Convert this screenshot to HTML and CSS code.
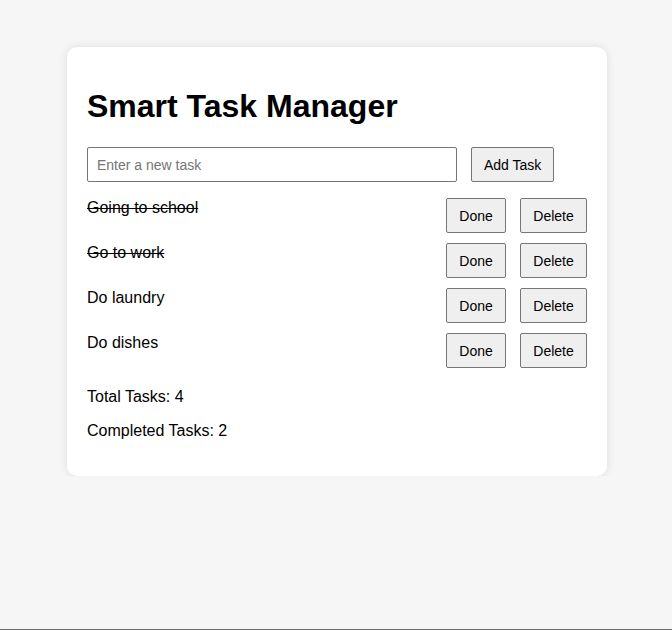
FILE: index.html
```html
<!DOCTYPE html>
<html lang="en">
<head>
<meta charset="utf-8">
<title>Smart Task Manager</title>
<link rel="stylesheet" href="styles.css">
</head>
<body>
<div class="card">
  <h1 class="title">Smart Task Manager</h1>
  <div class="add-row">
    <input class="task-input" type="text" placeholder="Enter a new task">
    <button class="btn">Add Task</button>
  </div>
  <div class="task-list">
    <div class="task">
      <span class="task-text done">Going to school</span>
      <div class="actions"><button class="btn btn-done">Done</button><button class="btn btn-del">Delete</button></div>
    </div>
    <div class="task">
      <span class="task-text done">Go to work</span>
      <div class="actions"><button class="btn btn-done">Done</button><button class="btn btn-del">Delete</button></div>
    </div>
    <div class="task">
      <span class="task-text">Do laundry</span>
      <div class="actions"><button class="btn btn-done">Done</button><button class="btn btn-del">Delete</button></div>
    </div>
    <div class="task">
      <span class="task-text">Do dishes</span>
      <div class="actions"><button class="btn btn-done">Done</button><button class="btn btn-del">Delete</button></div>
    </div>
  </div>
  <p class="stat">Total Tasks: 4</p>
  <p class="stat">Completed Tasks: 2</p>
</div>
</body>
</html>
```
FILE: styles.css
```css
html {
  min-height: 100%;
  background: #f6f6f6;
  box-shadow: inset 0 -1px 0 #6b6b6b;
}
body {
  margin: 0;
  padding: 47px 0 0 67px;
  font-family: "Liberation Sans", Arial, sans-serif;
  color: #000;
}
.card {
  width: 500px;
  padding: 20px;
  background: #fff;
  border-radius: 10px;
  box-shadow: 0 0 10px rgba(0, 0, 0, 0.1);
}
.title {
  font-size: 32px;
  font-weight: bold;
  margin: 21px 0 22px;
  line-height: 37px;
}
.add-row {
  display: flex;
  gap: 14px;
  margin-bottom: 16px;
}
.task-input {
  width: 370px;
  height: 35px;
  box-sizing: border-box;
  padding: 8px 9px;
  font-family: "Liberation Sans", Arial, sans-serif;
  font-size: 14px;
  border: 1px solid #767676;
  border-radius: 2px;
  margin: 0;
}
.task-input::placeholder {
  color: #757575;
}
.btn {
  height: 35px;
  box-sizing: border-box;
  padding: 0 12px;
  font-family: "Liberation Sans", Arial, sans-serif;
  font-size: 14px;
  color: #000;
  background: #efefef;
  border: 1px solid #767676;
  border-radius: 2px;
  margin: 0;
}
.btn-done {
  min-width: 60px;
}
.btn-del {
  min-width: 67px;
}
.task-list {
  display: flex;
  flex-direction: column;
  gap: 10px;
  margin-bottom: 20px;
}
.task {
  display: flex;
  justify-content: space-between;
  align-items: flex-start;
}
.task-text {
  font-size: 16px;
  line-height: 18px;
  padding-top: 1px;
}
.task-text.done {
  text-decoration: line-through;
}
.actions {
  display: flex;
  gap: 14px;
}
.stat {
  font-size: 16px;
  line-height: 18px;
  margin: 16px 0;
}
```
